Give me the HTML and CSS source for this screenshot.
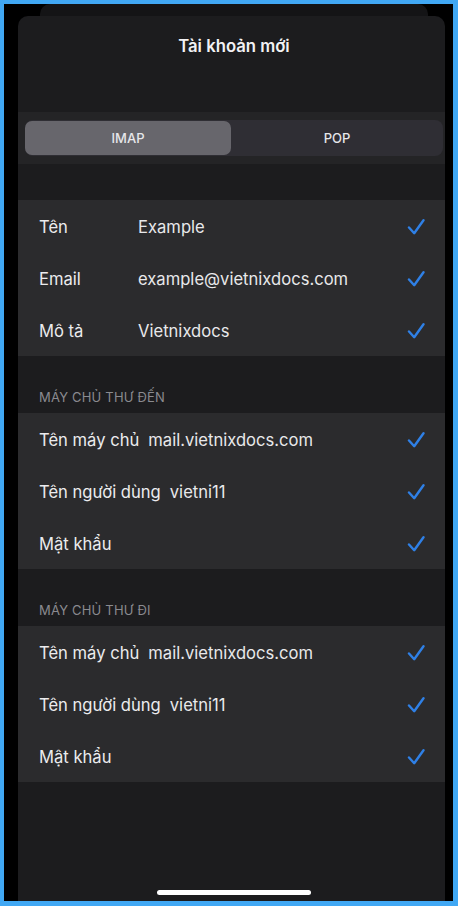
FILE: index.html
```html
<!DOCTYPE html>
<html lang="vi">
<head>
<meta charset="utf-8">
<title>Tài khoản mới</title>
<link rel="stylesheet" href="styles.css">
</head>
<body>
<div class="frame">
  <div class="backcard"></div>
  <div class="sheet">
    <div class="header"><h1 class="title">Tài khoản mới</h1></div>
    <div class="seg-band">
      <div class="seg">
        <div class="seg-item active">IMAP</div>
        <div class="seg-item">POP</div>
      </div>
    </div>
    <div class="gap"></div>
    <div class="group">
      <div class="row"><span class="label w1">Tên</span><span class="value">Example</span><svg class="check" viewBox="0 0 18 18"><path d="M2 9.5 L7.2 15.2 L16.5 2.2"/></svg></div>
      <div class="row"><span class="label w1">Email</span><span class="value">example@vietnixdocs.com</span><svg class="check" viewBox="0 0 18 18"><path d="M2 9.5 L7.2 15.2 L16.5 2.2"/></svg></div>
      <div class="row"><span class="label w1">Mô tả</span><span class="value">Vietnixdocs</span><svg class="check" viewBox="0 0 18 18"><path d="M2 9.5 L7.2 15.2 L16.5 2.2"/></svg></div>
    </div>
    <div class="section-head">MÁY CHỦ THƯ ĐẾN</div>
    <div class="group">
      <div class="row"><span class="label">Tên máy chủ</span><span class="value">mail.vietnixdocs.com</span><svg class="check" viewBox="0 0 18 18"><path d="M2 9.5 L7.2 15.2 L16.5 2.2"/></svg></div>
      <div class="row"><span class="label">Tên người dùng</span><span class="value">vietni11</span><svg class="check" viewBox="0 0 18 18"><path d="M2 9.5 L7.2 15.2 L16.5 2.2"/></svg></div>
      <div class="row"><span class="label">Mật khẩu</span><span class="value"></span><svg class="check" viewBox="0 0 18 18"><path d="M2 9.5 L7.2 15.2 L16.5 2.2"/></svg></div>
    </div>
    <div class="section-head">MÁY CHỦ THƯ ĐI</div>
    <div class="group">
      <div class="row"><span class="label">Tên máy chủ</span><span class="value">mail.vietnixdocs.com</span><svg class="check" viewBox="0 0 18 18"><path d="M2 9.5 L7.2 15.2 L16.5 2.2"/></svg></div>
      <div class="row"><span class="label">Tên người dùng</span><span class="value">vietni11</span><svg class="check" viewBox="0 0 18 18"><path d="M2 9.5 L7.2 15.2 L16.5 2.2"/></svg></div>
      <div class="row"><span class="label">Mật khẩu</span><span class="value"></span><svg class="check" viewBox="0 0 18 18"><path d="M2 9.5 L7.2 15.2 L16.5 2.2"/></svg></div>
    </div>
    <div class="footer"><div class="home-indicator"></div></div>
  </div>
</div>
</body>
</html>
```

FILE: styles.css
```css
* { box-sizing: border-box; }
html, body { margin: 0; padding: 0; }
body {
  background: #41a8f4;
  width: 458px;
  height: 906px;
  overflow: hidden;
  font-family: Inter, "Noto Sans", "Liberation Sans", sans-serif;
  padding: 4px 5px 5px 4px;
}
.frame {
  height: 897px;
  background: #000;
  padding: 0 8px 0 14px;
  display: flex;
  flex-direction: column;
}
.backcard {
  height: 12px;
  margin: 0 17px 0 22px;
  background: #141416;
  border-radius: 10px 10px 0 0;
  flex: none;
}
.sheet {
  flex: 1;
  background: #1c1c1e;
  border-radius: 10px 10px 0 0;
  display: flex;
  flex-direction: column;
}
.header {
  height: 96px;
  padding-top: 19px;
  text-align: center;
}
.title {
  margin: 0;
  font-size: 16.7px;
  line-height: 22px;
  font-weight: 600;
  color: #f2f2f4;
  padding-left: 5px;
}
.seg-band {
  height: 52px;
  background: #242426;
  padding: 8px 2px 8px 7px;
}
.seg {
  height: 36px;
  background: #2f2e34;
  border-radius: 8px;
  display: flex;
  padding: 1px 0;
}
.seg-item {
  flex: 1;
  display: flex;
  align-items: center;
  justify-content: center;
  font-size: 13px;
  font-weight: 500;
  color: #e6e6ea;
  border-radius: 7px;
}
.seg-item.active {
  background: #67666c;
  flex: 0 0 206px;
}
.gap { height: 36px; }
.group {
  background: #2b2b2d;
}
.row {
  height: 52px;
  display: flex;
  align-items: center;
  padding: 1px 20px 0 21px;
  font-size: 16.6px;
  color: #ececee;
}
.label { margin-right: 9px; white-space: nowrap; }
.label.w1 { width: 99px; margin-right: 0; }
.value { flex: 1; color: #e8e8ea; white-space: nowrap; }
.check {
  width: 18px;
  height: 18px;
  fill: none;
  stroke: #2f80e6;
  stroke-width: 2.4;
  stroke-linecap: round;
  stroke-linejoin: round;
  flex: none;
}
.section-head {
  height: 57px;
  display: flex;
  align-items: flex-end;
  padding: 0 0 8px 21px;
  font-size: 13px;
  letter-spacing: 0.2px;
  color: #8a8a8f;
}
.footer {
  flex: 1;
  display: flex;
  align-items: flex-end;
  justify-content: center;
  padding: 0 0 6px 5px;
}
.home-indicator {
  width: 154px;
  height: 5px;
  background: #ffffff;
  border-radius: 3px;
}
```
